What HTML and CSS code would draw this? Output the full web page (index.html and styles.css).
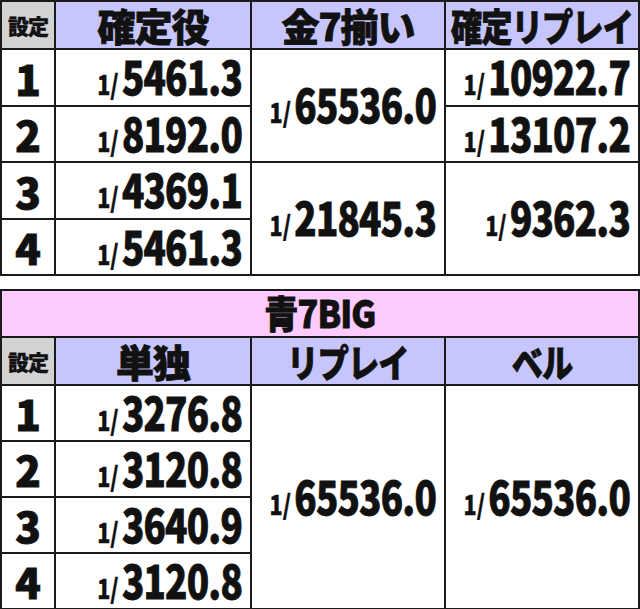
FILE: index.html
```html
<!DOCTYPE html>
<html lang="ja">
<head>
<meta charset="utf-8">
<link rel="stylesheet" href="styles.css">
</head>
<body>
<table class="tbl t1">
  <colgroup><col class="c0"><col class="c1"><col class="c2"><col class="c3"></colgroup>
  <tr class="hdr">
    <th class="set">設定</th>
    <th><span class="h">確定役</span></th>
    <th><span class="h">金7揃い</span></th>
    <th><span class="h sq">確定リプレイ</span></th>
  </tr>
  <tr class="r r1">
    <td class="num">1</td>
    <td class="fr"><span class="f"><small>1/</small>5461.3</span></td>
    <td class="fr" rowspan="2"><span class="f"><small>1/</small>65536.0</span></td>
    <td class="fr"><span class="f"><small>1/</small>10922.7</span></td>
  </tr>
  <tr class="r r2">
    <td class="num">2</td>
    <td class="fr"><span class="f"><small>1/</small>8192.0</span></td>
    <td class="fr"><span class="f"><small>1/</small>13107.2</span></td>
  </tr>
  <tr class="r r1">
    <td class="num">3</td>
    <td class="fr"><span class="f"><small>1/</small>4369.1</span></td>
    <td class="fr" rowspan="2"><span class="f"><small>1/</small>21845.3</span></td>
    <td class="fr" rowspan="2"><span class="f"><small>1/</small>9362.3</span></td>
  </tr>
  <tr class="r r2">
    <td class="num">4</td>
    <td class="fr"><span class="f"><small>1/</small>5461.3</span></td>
  </tr>
</table>

<table class="tbl t2">
  <colgroup><col class="c0"><col class="c1"><col class="c2"><col class="c3"></colgroup>
  <tr class="pink">
    <th colspan="4"><span class="h">青7BIG</span></th>
  </tr>
  <tr class="hdr hdr2">
    <th class="set">設定</th>
    <th><span class="h">単独</span></th>
    <th><span class="h sq">リプレイ</span></th>
    <th><span class="h sq">ベル</span></th>
  </tr>
  <tr class="r r3">
    <td class="num">1</td>
    <td class="fr"><span class="f"><small>1/</small>3276.8</span></td>
    <td class="fr" rowspan="4"><span class="f"><small>1/</small>65536.0</span></td>
    <td class="fr" rowspan="4"><span class="f"><small>1/</small>65536.0</span></td>
  </tr>
  <tr class="r r3">
    <td class="num">2</td>
    <td class="fr"><span class="f"><small>1/</small>3120.8</span></td>
  </tr>
  <tr class="r r3">
    <td class="num">3</td>
    <td class="fr"><span class="f"><small>1/</small>3640.9</span></td>
  </tr>
  <tr class="r r3">
    <td class="num">4</td>
    <td class="fr"><span class="f"><small>1/</small>3120.8</span></td>
  </tr>
</table>
</body>
</html>
```

FILE: styles.css
```css
html, body {
  margin: 0;
  padding: 0;
  background: #ffffff;
}
body {
  font-family: "Noto Sans CJK JP", "Noto Sans", sans-serif;
  color: #111111;
}
.tbl {
  border-collapse: collapse;
  table-layout: fixed;
  width: 638px;
  line-height: 36px;
}
.t2 {
  margin-top: 13px;
}
.c0 { width: 54px; }
.c1 { width: 196px; }
.c2 { width: 194px; }
.c3 { width: 194px; }
.tbl th, .tbl td {
  border: 2px solid #1a1a1a;
  padding: 0;
  white-space: nowrap;
  vertical-align: middle;
}
.hdr th {
  background: #c6c6fd;
  height: 46px;
  text-align: center;
}
.hdr2 th {
  height: 46px;
}
.hdr th.set {
  background: #d3d3d3;
  font-size: 21px;
  font-weight: 900;
  letter-spacing: -1px;
  -webkit-text-stroke: 0.4px #111;
}
.pink th {
  background: #fecbfe;
  height: 45px;
  text-align: center;
}
.h {
  display: inline-block;
  vertical-align: middle;
  font-size: 38px;
  font-weight: 900;
  line-height: 42px;
  letter-spacing: -1px;
  -webkit-text-stroke: 0.8px #111;
}
.h.sq {
  transform: scaleX(0.82);
  transform-origin: center center;
  margin: 0 -30px;
}
.pink .h {
  transform: scaleX(0.9);
  position: relative;
  top: -2px;
}
.r1 td { height: 55px; }
.r2 td { height: 54px; }
.r3 td { height: 54px; }
.num {
  text-align: center;
  font-size: 42px;
  font-weight: 900;
  -webkit-text-stroke: 1px #111;
}
.fr {
  text-align: right;
  padding-right: 8px !important;
}
.f {
  display: inline-block;
  vertical-align: middle;
  font-size: 46px;
  font-weight: 900;
  line-height: 44px;
  letter-spacing: -1px;
  transform: scaleX(0.8);
  transform-origin: right center;
  -webkit-text-stroke: 0.8px #111;
  position: relative;
  top: 2px;
  margin-left: -80px;
}
.f small {
  font-size: 27px;
  font-weight: 900;
  margin-right: 4px;
  letter-spacing: 0;
  -webkit-text-stroke: 0.4px #111;
}
```
